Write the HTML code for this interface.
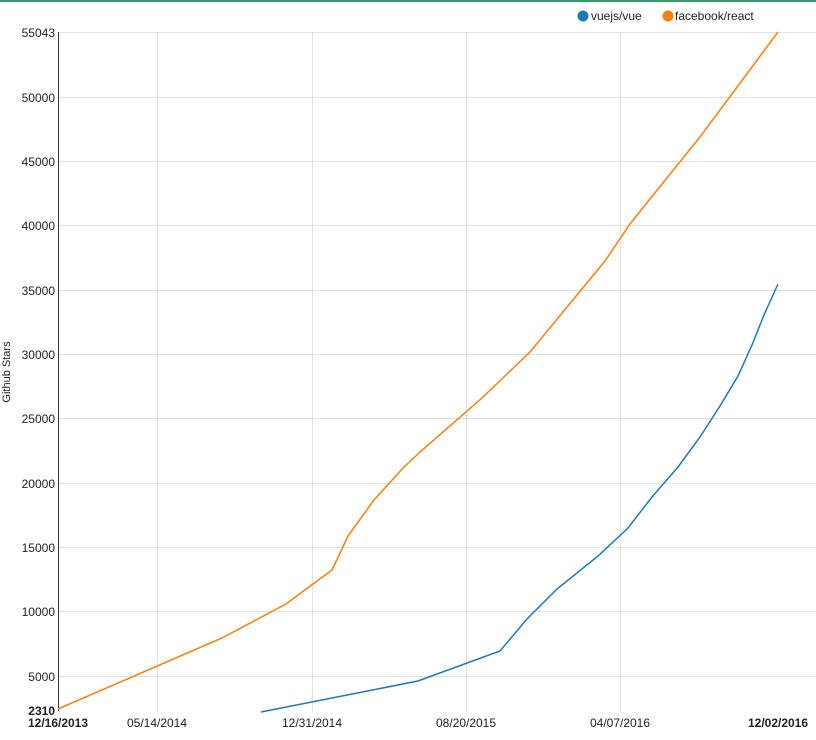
<!DOCTYPE html>
<html><head><style>
html,body{margin:0;padding:0;background:#fff;width:816px;height:740px;overflow:hidden}
svg{display:block;font-family:"Liberation Sans",Arial,sans-serif}
</style></head><body>
<svg width="816" height="740" viewBox="0 0 816 740">
<rect x="0" y="0" width="816" height="2" fill="#3a9b6a"/>
<g stroke="#e2e2e2" stroke-width="1">
<line x1="58" y1="32.5" x2="816" y2="32.5"/>
<line x1="58" y1="97.5" x2="816" y2="97.5"/>
<line x1="58" y1="161.5" x2="816" y2="161.5"/>
<line x1="58" y1="225.5" x2="816" y2="225.5"/>
<line x1="58" y1="290.5" x2="816" y2="290.5"/>
<line x1="58" y1="354.5" x2="816" y2="354.5"/>
<line x1="58" y1="418.5" x2="816" y2="418.5"/>
<line x1="58" y1="483.5" x2="816" y2="483.5"/>
<line x1="58" y1="547.5" x2="816" y2="547.5"/>
<line x1="58" y1="611.5" x2="816" y2="611.5"/>
<line x1="58" y1="676.5" x2="816" y2="676.5"/>
<line x1="157.5" y1="32" x2="157.5" y2="712"/>
<line x1="312.5" y1="32" x2="312.5" y2="712"/>
<line x1="466.5" y1="32" x2="466.5" y2="712"/>
<line x1="620.5" y1="32" x2="620.5" y2="712"/>
</g>
<line x1="58.5" y1="32" x2="58.5" y2="711" stroke="#333" stroke-width="1"/>
<g font-size="12" fill="#222" text-anchor="end">
<text x="55" y="37">55043</text>
<text x="55" y="102">50000</text>
<text x="55" y="166">45000</text>
<text x="55" y="230">40000</text>
<text x="55" y="295">35000</text>
<text x="55" y="359">30000</text>
<text x="55" y="423">25000</text>
<text x="55" y="488">20000</text>
<text x="55" y="552">15000</text>
<text x="55" y="616">10000</text>
<text x="55" y="681">5000</text>
<text x="55" y="715" font-weight="bold">2310</text>
</g>
<g font-size="12" fill="#222" text-anchor="middle">
<text x="58" y="727" font-weight="bold">12/16/2013</text>
<text x="157" y="727">05/14/2014</text>
<text x="312" y="727">12/31/2014</text>
<text x="466" y="727">08/20/2015</text>
<text x="620" y="727">04/07/2016</text>
<text x="778" y="727" font-weight="bold">12/02/2016</text>
</g>
<text transform="translate(10,372) rotate(-90)" font-size="11" fill="#222" text-anchor="middle">Github Stars</text>
<circle cx="583" cy="16" r="5.5" fill="#1f77b4"/>
<text x="591" y="20" font-size="12" fill="#222">vuejs/vue</text>
<circle cx="668" cy="16" r="5.5" fill="#ff7f0e"/>
<text x="675" y="20" font-size="12" fill="#222">facebook/react</text>
<polyline fill="none" stroke="#ff7f0e" stroke-width="1.5" points="58,709 222,638 286,604 332,570 348,536 374,500 404,467 420,452 482,398 530,352 605,261 630,224 654,194 700,137 778,32"/>
<polyline fill="none" stroke="#1f77b4" stroke-width="1.5" points="261,712 418,681 500,651 527,619 557,589 598,556 628,528 652,497 678,467 700,437 720,406 738,376 752,345 764,315 778,284"/>
</svg>
</body></html>
